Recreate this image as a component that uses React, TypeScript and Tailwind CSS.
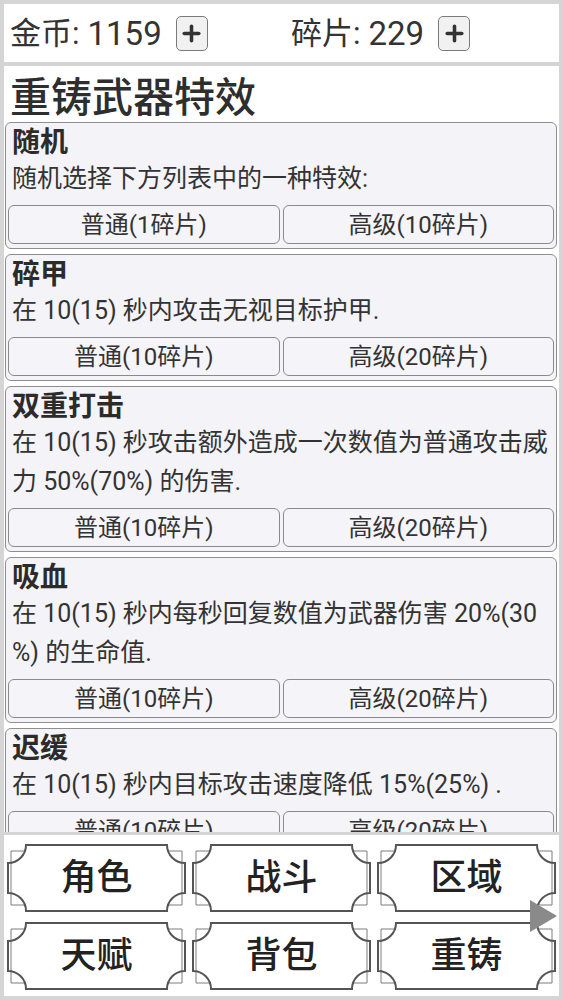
import { Plus } from 'lucide-react';

type Effect = {
  name: string;
  lines: string[];
  basic: string;
  advanced: string;
};

const effects: Effect[] = [
  { name: '随机', lines: ['随机选择下方列表中的一种特效:'], basic: '普通(1碎片)', advanced: '高级(10碎片)' },
  { name: '碎甲', lines: ['在 10(15) 秒内攻击无视目标护甲.'], basic: '普通(10碎片)', advanced: '高级(20碎片)' },
  {
    name: '双重打击',
    lines: ['在 10(15) 秒攻击额外造成一次数值为普通攻击威', '力 50%(70%) 的伤害.'],
    basic: '普通(10碎片)',
    advanced: '高级(20碎片)',
  },
  {
    name: '吸血',
    lines: ['在 10(15) 秒内每秒回复数值为武器伤害 20%(30', '%) 的生命值.'],
    basic: '普通(10碎片)',
    advanced: '高级(20碎片)',
  },
  { name: '迟缓', lines: ['在 10(15) 秒内目标攻击速度降低 15%(25%) .'], basic: '普通(10碎片)', advanced: '高级(20碎片)' },
];

const navItems = ['角色', '战斗', '区域', '天赋', '背包', '重铸'];

function Counter({ label, value }: { label: string; value: string }) {
  return (
    <div className="flex items-center">
      <span className="text-[31px] leading-none">{label}: </span>
      <span className="ml-[8px] text-[33px] leading-none">{value}</span>
      <button className="ml-[14px] flex h-[35px] w-[32px] items-center justify-center rounded-[5px] border border-[#7a7a7a] bg-[#f1f1f1]">
        <Plus size={25} strokeWidth={3.4} className="text-[#333]" />
      </button>
    </div>
  );
}

function EffectCard({ effect }: { effect: Effect }) {
  return (
    <div className="shrink-0 rounded-[6px] border border-[#8e8e8e] bg-[#f4f3f7] pt-[4px] pb-[4px]">
      <div className="px-[6px] text-[28px] font-bold leading-[32px] text-[#2b2b2b]">{effect.name}</div>
      <div className="px-[6px] text-[25px] leading-[39px] text-[#333]">
        {effect.lines.map((line, i) => (
          <div key={i} className="whitespace-nowrap">
            {line}
          </div>
        ))}
      </div>
      <div className="mt-[7px] grid grid-cols-2 gap-[3px] px-[2px]">
        <button className="h-[39px] rounded-[6px] border border-[#8a8a8a] bg-[#f5f4f8] text-[24px] text-[#333]">
          {effect.basic}
        </button>
        <button className="h-[39px] rounded-[6px] border border-[#8a8a8a] bg-[#f5f4f8] text-[24px] text-[#333]">
          {effect.advanced}
        </button>
      </div>
    </div>
  );
}

function NavButton({ label }: { label: string }) {
  return (
    <button className="relative flex h-[68px] items-center justify-center">
      <svg
        className="absolute inset-0 h-full w-full"
        viewBox="0 0 179 68"
        preserveAspectRatio="none"
        fill="none"
      >
        <path
          d="M4 7V61M175 7V61M4 7H18M175 7H161M4 61H18M175 61H161"
          stroke="#7d7d7d"
          strokeWidth="1"
        />
        <path
          d="M19 1H160A18 18 0 0 0 178 19V49A18 18 0 0 0 160 67H19A18 18 0 0 0 1 49V19A18 18 0 0 0 19 1Z"
          stroke="#555"
          strokeWidth="2"
        />
      </svg>
      <span className="relative text-[36px] font-medium leading-none text-[#222]">{label}</span>
    </button>
  );
}

export default function App() {
  return (
    <div className="flex h-[1000px] flex-col bg-[#d5d5d5] p-[4px] font-['Roboto','Noto_Sans_CJK_SC',sans-serif] text-[#333]">
      <header className="flex h-[58px] shrink-0 items-center bg-white pl-[6px]">
        <div className="w-[281px] shrink-0">
          <Counter label="金币" value="1159" />
        </div>
        <Counter label="碎片" value="229" />
      </header>

      <main className="mt-[4px] flex flex-1 flex-col overflow-hidden bg-white pl-[1px] pr-[2px]">
        <h1 className="shrink-0 px-[5px] pt-[8px] text-[41px] font-medium leading-[48px] text-[#2e2e2e]">
          重铸武器特效
        </h1>
        <div className="flex flex-col gap-[5px]">
          {effects.map((effect) => (
            <EffectCard key={effect.name} effect={effect} />
          ))}
        </div>
      </main>

      <nav className="relative mt-[3px] h-[161px] shrink-0 bg-white px-[3px] pt-[9px]">
        <div className="grid grid-cols-3 gap-x-[6px] gap-y-[10px]">
          {navItems.map((item) => (
            <NavButton key={item} label={item} />
          ))}
        </div>
        <svg className="absolute right-[2px] top-[65px] h-[32px] w-[27px]" viewBox="0 0 27 32">
          <polygon points="0,0 27,16 0,32" fill="#8a8a8a" />
        </svg>
      </nav>
    </div>
  );
}
